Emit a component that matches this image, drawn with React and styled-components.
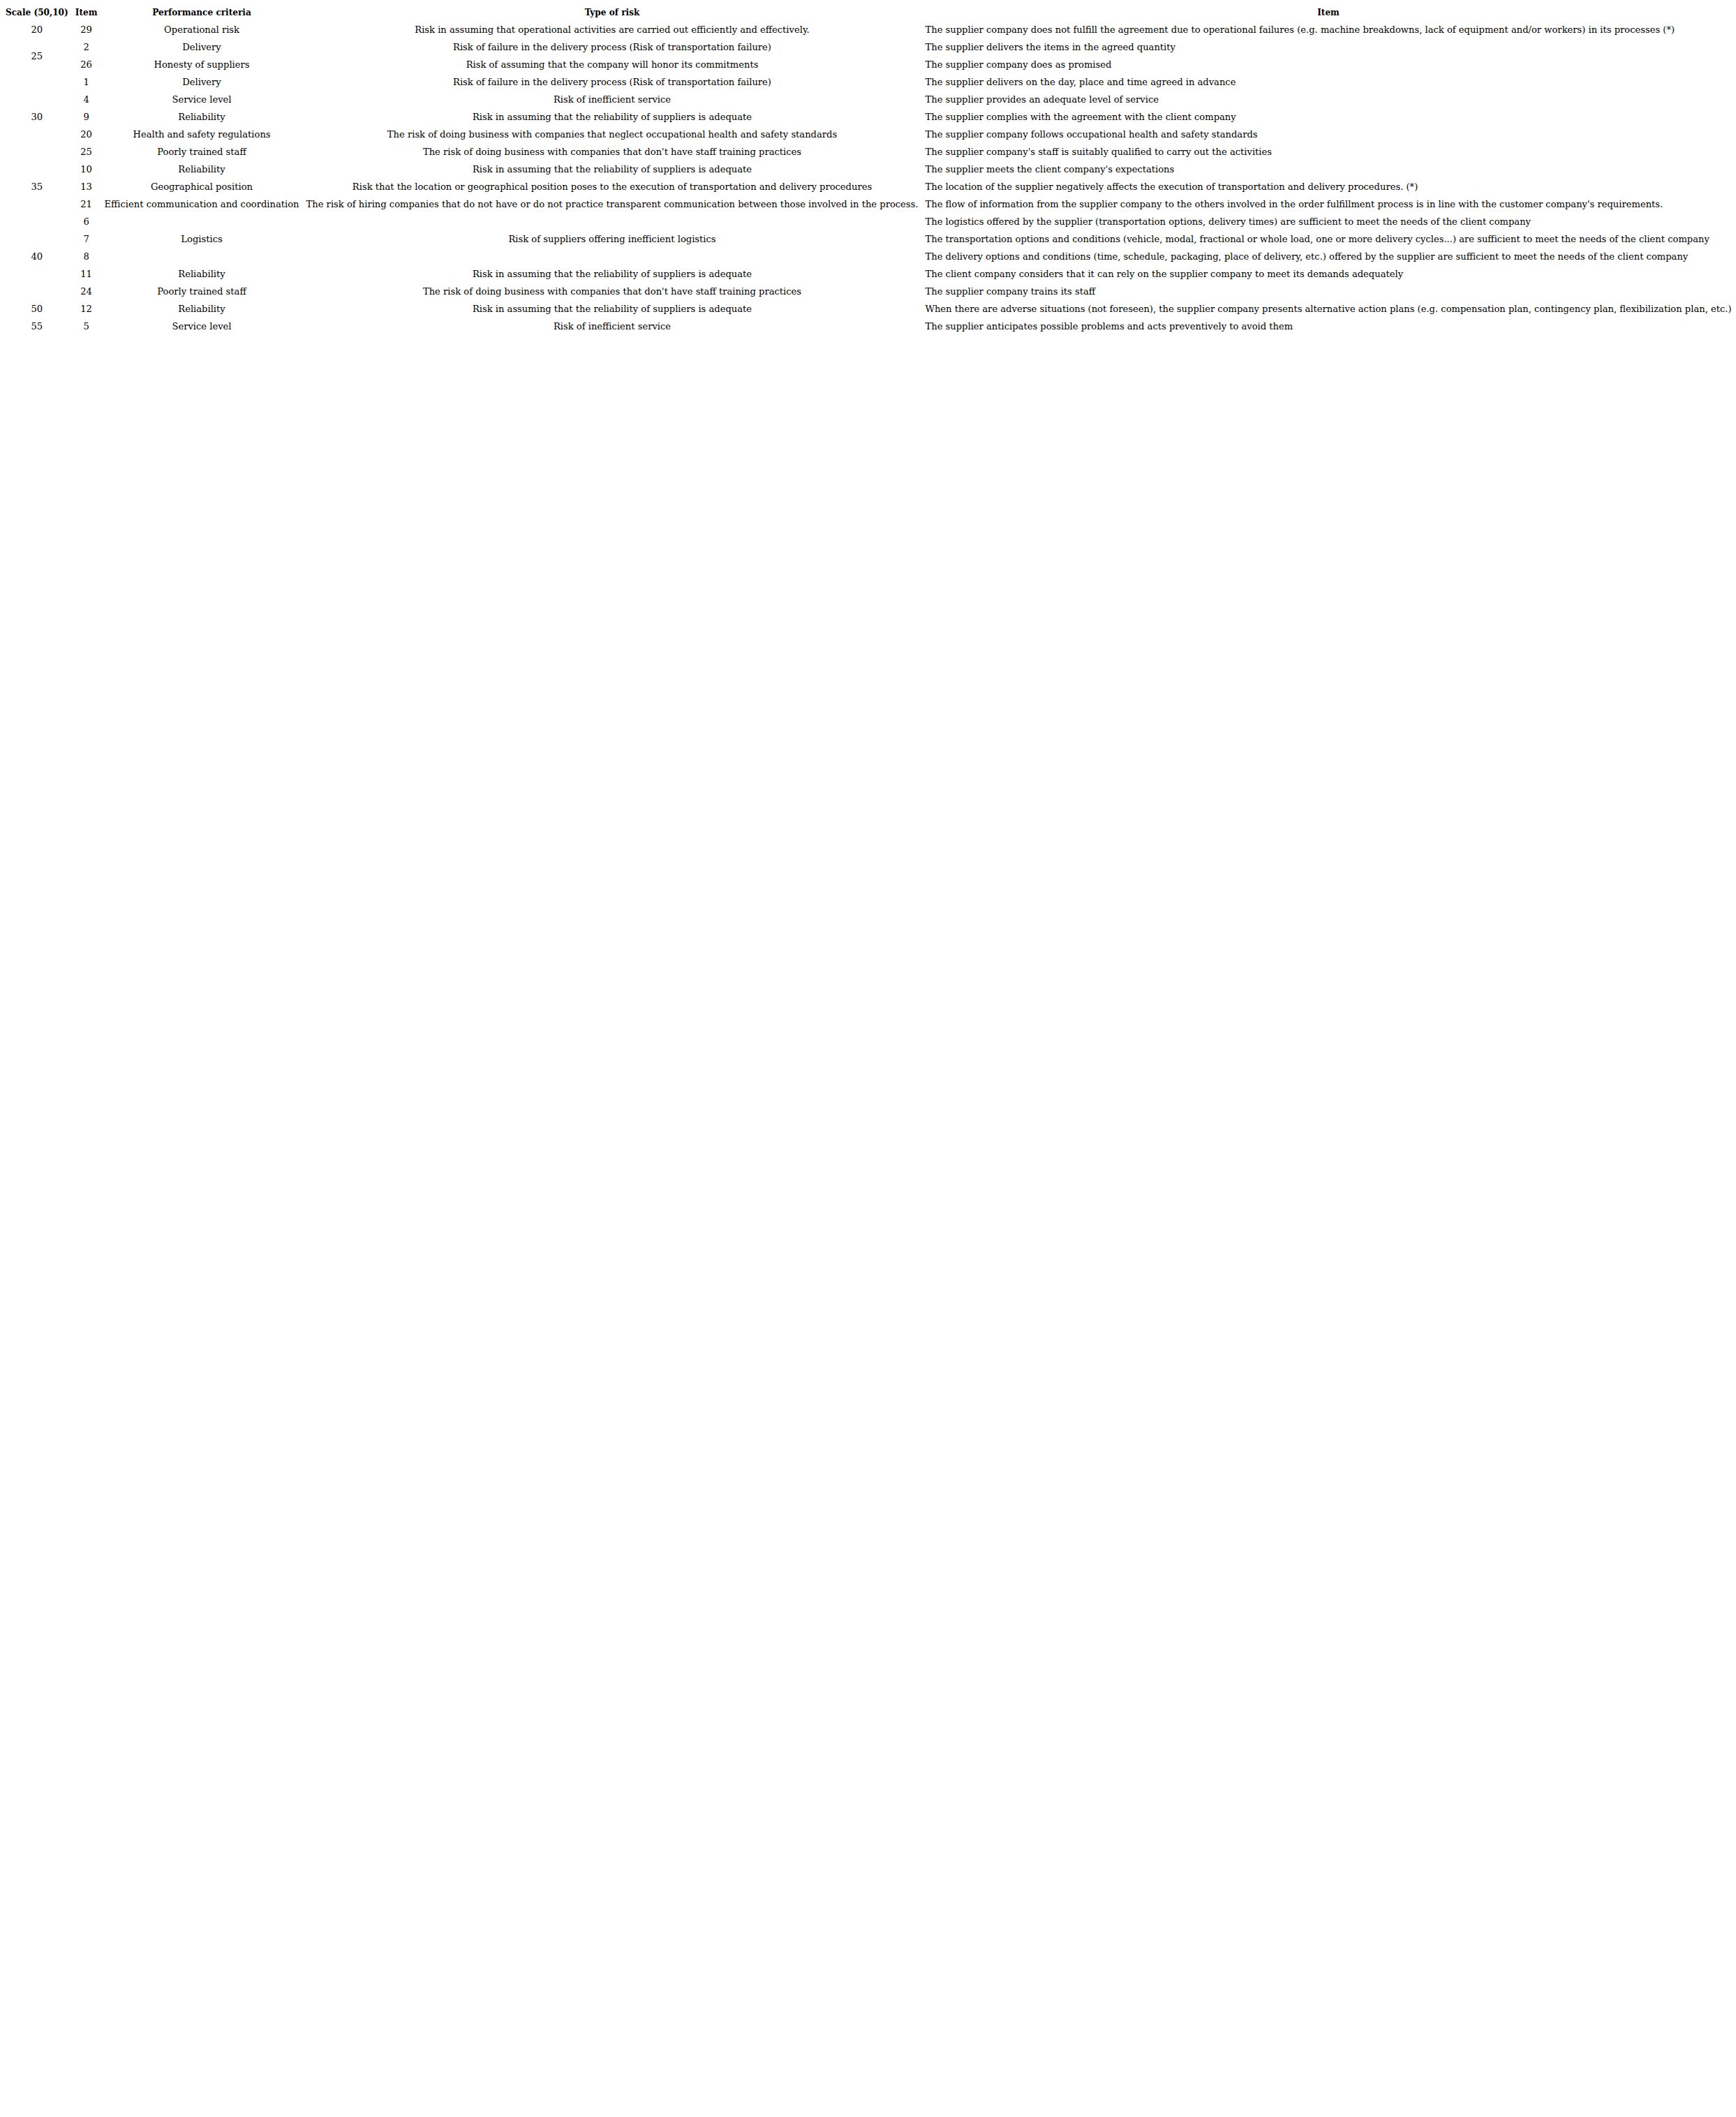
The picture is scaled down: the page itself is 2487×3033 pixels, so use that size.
import React from "react";
import styled, { createGlobalStyle } from "styled-components";

const Global = createGlobalStyle`
  html, body { margin: 0; padding: 0; background: #fff; }
  body { font-family: "DejaVu Serif", "Liberation Serif", serif; color: #000; }
`;

const Page = styled.div`
  padding: 5px 3px;
`;

const Table = styled.table`
  border-collapse: collapse;
  font-size: 13.1px;
  white-space: nowrap;
`;

const Th = styled.th`
  font-weight: bold;
  font-size: 12.1px;
  text-align: center;
  height: 25px;
  padding: 0 5px;
  vertical-align: middle;
`;

const Td = styled.td`
  height: 25px;
  padding: 0 5px;
  text-align: ${(p) => (p.$left ? "left" : "center")};
  vertical-align: middle;
`;

const rows = [
  { scale: ["20", 1], item: "29", crit: ["Operational risk", 1], risk: ["Risk in assuming that operational activities are carried out efficiently and effectively.", 1], text: "The supplier company does not fulfill the agreement due to operational failures (e.g. machine breakdowns, lack of equipment and/or workers) in its processes (*)" },
  { scale: ["25", 2], item: "2", crit: ["Delivery", 1], risk: ["Risk of failure in the delivery process (Risk of transportation failure)", 1], text: "The supplier delivers the items in the agreed quantity" },
  { item: "26", crit: ["Honesty of suppliers", 1], risk: ["Risk of assuming that the company will honor its commitments", 1], text: "The supplier company does as promised" },
  { scale: ["30", 5], item: "1", crit: ["Delivery", 1], risk: ["Risk of failure in the delivery process (Risk of transportation failure)", 1], text: "The supplier delivers on the day, place and time agreed in advance" },
  { item: "4", crit: ["Service level", 1], risk: ["Risk of inefficient service", 1], text: "The supplier provides an adequate level of service" },
  { item: "9", crit: ["Reliability", 1], risk: ["Risk in assuming that the reliability of suppliers is adequate", 1], text: "The supplier complies with the agreement with the client company" },
  { item: "20", crit: ["Health and safety regulations", 1], risk: ["The risk of doing business with companies that neglect occupational health and safety standards", 1], text: "The supplier company follows occupational health and safety standards" },
  { item: "25", crit: ["Poorly trained staff", 1], risk: ["The risk of doing business with companies that don't have staff training practices", 1], text: "The supplier company's staff is suitably qualified to carry out the activities" },
  { scale: ["35", 3], item: "10", crit: ["Reliability", 1], risk: ["Risk in assuming that the reliability of suppliers is adequate", 1], text: "The supplier meets the client company's expectations" },
  { item: "13", crit: ["Geographical position", 1], risk: ["Risk that the location or geographical position poses to the execution of transportation and delivery procedures", 1], text: "The location of the supplier negatively affects the execution of transportation and delivery procedures. (*)" },
  { item: "21", crit: ["Efficient communication and coordination", 1], risk: ["The risk of hiring companies that do not have or do not practice transparent communication between those involved in the process.", 1], text: "The flow of information from the supplier company to the others involved in the order fulfillment process is in line with the customer company's requirements." },
  { scale: ["40", 5], item: "6", crit: ["Logistics", 3], risk: ["Risk of suppliers offering inefficient logistics", 3], text: "The logistics offered by the supplier (transportation options, delivery times) are sufficient to meet the needs of the client company" },
  { item: "7", text: "The transportation options and conditions (vehicle, modal, fractional or whole load, one or more delivery cycles...) are sufficient to meet the needs of the client company" },
  { item: "8", text: "The delivery options and conditions (time, schedule, packaging, place of delivery, etc.) offered by the supplier are sufficient to meet the needs of the client company" },
  { item: "11", crit: ["Reliability", 1], risk: ["Risk in assuming that the reliability of suppliers is adequate", 1], text: "The client company considers that it can rely on the supplier company to meet its demands adequately" },
  { item: "24", crit: ["Poorly trained staff", 1], risk: ["The risk of doing business with companies that don't have staff training practices", 1], text: "The supplier company trains its staff" },
  { scale: ["50", 1], item: "12", crit: ["Reliability", 1], risk: ["Risk in assuming that the reliability of suppliers is adequate", 1], text: "When there are adverse situations (not foreseen), the supplier company presents alternative action plans (e.g. compensation plan, contingency plan, flexibilization plan, etc.)" },
  { scale: ["55", 1], item: "5", crit: ["Service level", 1], risk: ["Risk of inefficient service", 1], text: "The supplier anticipates possible problems and acts preventively to avoid them" },
];

export default function App() {
  return (
    <Page>
      <Global />
      <Table>
        <thead>
          <tr>
            <Th>Scale (50,10)</Th>
            <Th>Item</Th>
            <Th>Performance criteria</Th>
            <Th>Type of risk</Th>
            <Th>Item</Th>
          </tr>
        </thead>
        <tbody>
          {rows.map((r, i) => (
            <tr key={i}>
              {r.scale && <Td rowSpan={r.scale[1]}>{r.scale[0]}</Td>}
              <Td>{r.item}</Td>
              {r.crit && <Td rowSpan={r.crit[1]}>{r.crit[0]}</Td>}
              {r.risk && <Td rowSpan={r.risk[1]}>{r.risk[0]}</Td>}
              <Td $left>{r.text}</Td>
            </tr>
          ))}
        </tbody>
      </Table>
    </Page>
  );
}
